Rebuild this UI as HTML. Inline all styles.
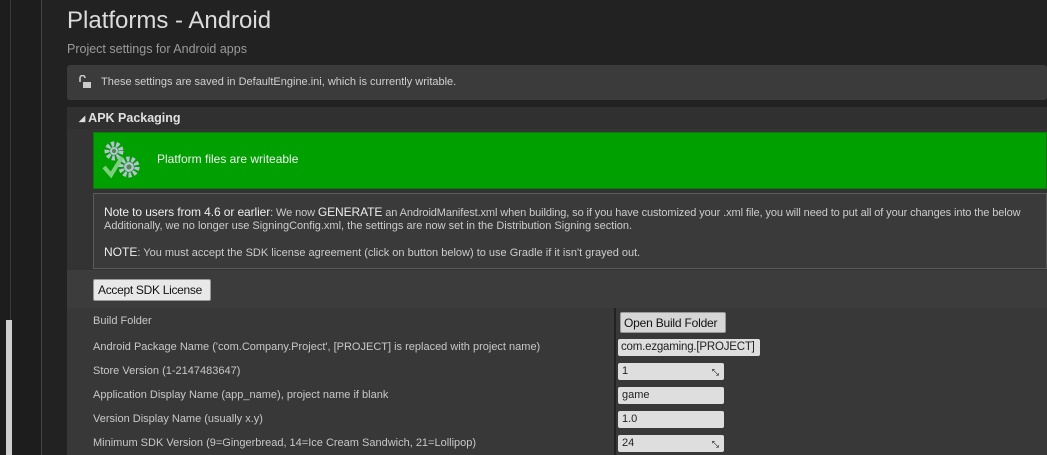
<!DOCTYPE html>
<html><head><style>
body{margin:0;width:1047px;height:455px;overflow:hidden;background:#222;font-family:"Liberation Sans",sans-serif;position:relative}
div{position:absolute;box-sizing:border-box}
.t{white-space:nowrap}
.lbl{left:93px;font-size:11px;color:#c8c8c8}
.in{left:618px;height:17px;background:#dedede;border-radius:2px;color:#222;font-size:11px;padding:2px 4px;line-height:13px}
.ar{position:absolute;right:5px;top:3px;font-size:9px;color:#111}
</style></head><body>
<div style="left:0;top:0;width:41px;height:455px;background:#1d1d1d"></div>
<div style="left:10px;top:0;width:1px;height:455px;background:#3a3a3a"></div>
<div style="left:41px;top:0;width:1px;height:455px;background:#444"></div>
<div style="left:6px;top:320px;width:6px;height:135px;background:#cfcfcf"></div>
<div class="t" style="left:67px;top:7px;font-size:24px;color:#dcdcdc">Platforms - Android</div>
<div class="t" style="left:67px;top:42px;font-size:12.5px;color:#9a9a9a">Project settings for Android apps</div>
<div style="left:67px;top:65px;width:980px;height:35px;background:#3b3b3b;border-radius:3px"></div>
<svg style="position:absolute;left:78px;top:75px" width="14" height="14" viewBox="0 0 14 14"><path d="M2 7 V3 a2.5 2.5 0 0 1 5 0" fill="none" stroke="#ccc" stroke-width="1.6"/><rect x="5" y="7" width="8" height="6" fill="#ccc"/></svg>
<div class="t" style="left:101px;top:76px;font-size:11px;color:#d0d0d0">These settings are saved in DefaultEngine.ini, which is currently writable.</div>
<div style="left:67px;top:107px;width:980px;height:22px;background:#303030"></div>
<div class="t" style="left:79px;top:111px;font-size:12.5px;font-weight:bold;color:#e0e0e0"><span style="font-size:8px;vertical-align:1px">◢</span> APK Packaging</div>
<div style="left:67px;top:129px;width:980px;height:326px;background:#333"></div>
<div style="left:93px;top:132px;width:954px;height:57px;background:#00a000;border:1px solid #0a7a0a"></div>
<svg style="position:absolute;left:100px;top:139px" width="42" height="42" viewBox="0 0 42 42">
<circle cx="14" cy="12" r="7" fill="none" stroke="#b8c0d8" stroke-width="5" stroke-dasharray="3 2"/>
<circle cx="14" cy="12" r="4" fill="#b8c0d8"/><circle cx="14" cy="12" r="2" fill="#4a8a4a"/>
<circle cx="29" cy="28" r="8" fill="none" stroke="#b8c0d8" stroke-width="5" stroke-dasharray="3 2"/>
<circle cx="29" cy="28" r="5" fill="#b8c0d8"/><circle cx="29" cy="28" r="2.5" fill="#4a8a4a"/>
<path d="M4 28 L11 36 L22 18" fill="none" stroke="#7ccf7c" stroke-width="4"/>
</svg>
<div class="t" style="left:157px;top:152px;font-size:12px;color:#f0f0f0">Platform files are writeable</div>
<div style="left:93px;top:193px;width:954px;height:76px;background:#3a3a3a;border:1px solid #5a5a5a"></div>
<div class="t" style="left:104px;top:205px;font-size:11px;color:#ccc;letter-spacing:-0.1px"><span style="font-size:12px;color:#eee">Note to users from 4.6 or earlier</span>: We now <span style="font-size:12px;color:#eee">GENERATE</span> an AndroidManifest.xml when building, so if you have customized your .xml file, you will need to put all of your changes into the below</div>
<div class="t" style="left:104px;top:220px;font-size:11px;color:#ccc">Additionally, we no longer use SigningConfig.xml, the settings are now set in the Distribution Signing section.</div>
<div class="t" style="left:104px;top:245px;font-size:11px;color:#ccc"><span style="font-size:12px;color:#eee">NOTE</span>: You must accept the SDK license agreement (click on button below) to use Gradle if it isn't grayed out.</div>
<div style="left:67px;top:270px;width:980px;height:38px;background:#3c3c3c"></div>
<div class="t" style="left:93px;top:279px;width:118px;height:22px;background:#e8e8e8;border:1px solid #999;border-radius:2px;font-size:12px;color:#111;padding:3px 4px;letter-spacing:-0.3px">Accept SDK License</div>
<div style="left:67px;top:308px;width:980px;height:147px;background:#383838"></div>
<div style="left:614px;top:308px;width:2px;height:147px;background:#222"></div>
<div class="t lbl" style="top:315px">Build Folder</div>
<div class="t lbl" style="top:341px">Android Package Name ('com.Company.Project', [PROJECT] is replaced with project name)</div>
<div class="t lbl" style="top:365px">Store Version (1-2147483647)</div>
<div class="t lbl" style="top:389px">Application Display Name (app_name), project name if blank</div>
<div class="t lbl" style="top:413px">Version Display Name (usually x.y)</div>
<div class="t lbl" style="top:437px">Minimum SDK Version (9=Gingerbread, 14=Ice Cream Sandwich, 21=Lollipop)</div>
<div class="t" style="left:620px;top:312px;width:106px;height:21px;background:#d6d6d6;border:1px solid #999;border-radius:2px;font-size:12px;color:#111;padding:3px 3px;letter-spacing:-0.2px">Open Build Folder</div>
<div class="t in" style="top:339px;width:142px;font-size:11.5px;padding:2px 3px;letter-spacing:-0.2px">com.ezgaming.[PROJECT]</div>
<div class="t in" style="top:363px;width:106px">1<span class="ar">⤡</span></div>
<div class="t in" style="top:387px;width:106px">game</div>
<div class="t in" style="top:411px;width:106px">1.0</div>
<div class="t in" style="top:435px;width:106px">24<span class="ar">⤡</span></div>
</body></html>
